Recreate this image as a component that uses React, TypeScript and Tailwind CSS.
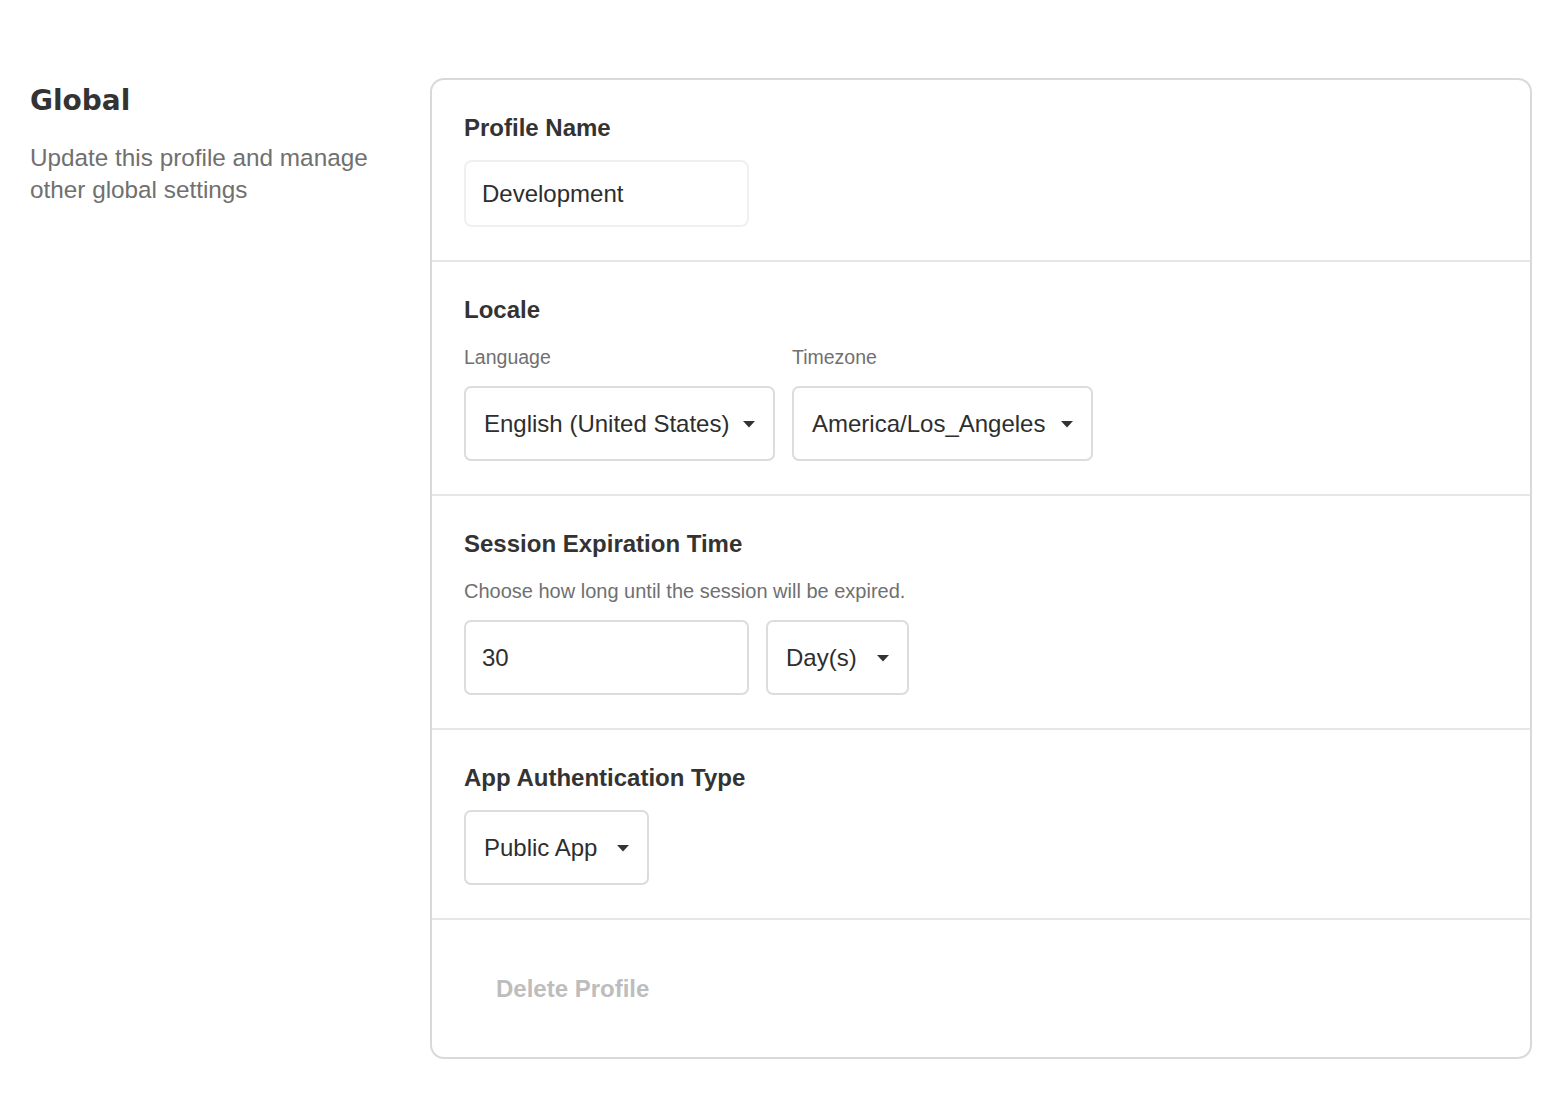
import type { ReactNode } from 'react'

const sans = 'font-["Liberation_Sans",Arial,sans-serif]'

function Caret() {
  return (
    <svg width="14" height="8" viewBox="0 0 14 8" className="shrink-0">
      <path d="M1 1h12L7 7.5z" fill="#333333" />
    </svg>
  )
}

function Select({ value, width }: { value: string; width: string }) {
  return (
    <div
      className={`${width} h-[75px] flex items-center justify-between pl-[18px] pr-[17px] border-2 border-[#dcdcdc] rounded-[7px] bg-white text-[24px] text-[#2e2e2e]`}
    >
      <span>{value}</span>
      <Caret />
    </div>
  )
}

function Section({ title, children }: { title: string; children: ReactNode }) {
  return (
    <div className="px-[32px] pt-[34px] pb-[33px] border-b-2 border-[#e6e6e6]">
      <h3 className="text-[24px] leading-[28px] font-bold text-[#333333]">{title}</h3>
      {children}
    </div>
  )
}

export default function App() {
  return (
    <div className={`min-h-screen bg-white ${sans}`}>
      <div className="flex pt-[78px] pl-[30px] pr-[30px]">
        <div className="w-[400px] shrink-0">
          <h2 className="font-['DejaVu_Sans',sans-serif] text-[28px] leading-[40px] font-bold text-[#333333] mt-[3px]">
            Global
          </h2>
          <p className="mt-[21px] text-[24.3px] leading-[32px] text-[#707070]">
            Update this profile and manage
            <br />
            other global settings
          </p>
        </div>

        <div className="flex-1 border-2 border-[#d9d9d9] rounded-[14px] bg-white">
          <Section title="Profile Name">
            <div className="mt-[18px] w-[285px] h-[67px] flex items-center px-[16px] border-2 border-[#f0f0f0] rounded-[8px] text-[24px] text-[#2e2e2e]">
              Development
            </div>
          </Section>

          <Section title="Locale">
            <div className="mt-[21px] flex gap-[17px]">
              <div>
                <div className="text-[19.5px] leading-[24px] text-[#707070]">Language</div>
                <div className="mt-[17px]">
                  <Select value="English (United States)" width="w-[311px]" />
                </div>
              </div>
              <div>
                <div className="text-[19.5px] leading-[24px] text-[#707070]">Timezone</div>
                <div className="mt-[17px]">
                  <Select value="America/Los_Angeles" width="w-[301px]" />
                </div>
              </div>
            </div>
          </Section>

          <Section title="Session Expiration Time">
            <p className="mt-[21px] text-[20px] leading-[24px] text-[#707070]">
              Choose how long until the session will be expired.
            </p>
            <div className="mt-[17px] flex gap-[17px]">
              <div className="w-[285px] h-[75px] flex items-center px-[16px] border-2 border-[#dcdcdc] rounded-[7px] text-[24px] text-[#2e2e2e]">
                30
              </div>
              <Select value="Day(s)" width="w-[143px]" />
            </div>
          </Section>

          <Section title="App Authentication Type">
            <div className="mt-[18px]">
              <Select value="Public App" width="w-[185px]" />
            </div>
          </Section>

          <div className="px-[32px] pt-[35px] pb-[34px]">
            <button
              type="button"
              className="h-[68px] px-[32px] text-[24px] font-bold text-[#bdbdbd] rounded-[8px]"
            >
              Delete Profile
            </button>
          </div>
        </div>
      </div>
    </div>
  )
}
